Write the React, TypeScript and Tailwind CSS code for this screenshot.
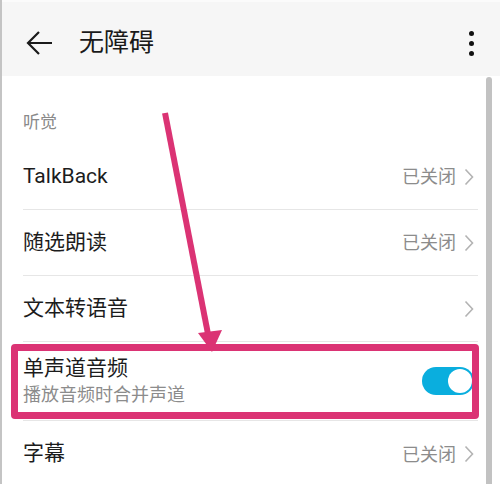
import React from "react";

const font = { fontFamily: 'Roboto, "Noto Sans CJK SC", sans-serif' };

function Chevron() {
  return (
    <svg width="10" height="18" viewBox="0 0 10 18" className="ml-[8px] shrink-0">
      <polyline points="1.5,1.5 8.5,9 1.5,16.5" fill="none" stroke="#b3b3b3" strokeWidth="1.6" />
    </svg>
  );
}

function Row({ title, value, last }: { title: string; value?: string; last?: boolean }) {
  return (
    <div
      className={
        "flex h-[66px] items-center justify-between pr-[4px] " +
        (last ? "" : "border-b border-[#e6e6e6]")
      }
    >
      <span className="text-[21px] text-[#1c1c1c]">{title}</span>
      <div className="flex items-center">
        {value && <span className="text-[18px] text-[#8c8c8c]">{value}</span>}
        <Chevron />
      </div>
    </div>
  );
}

export default function App() {
  return (
    <div
      className="relative h-[484px] w-[500px] overflow-hidden border-l-2 border-[#c4c4c4] bg-white"
      style={font}
    >
      {/* top bar */}
      <div className="flex h-[76px] items-center border-t-2 border-[#fbfbfb] bg-[#f6f6f6] pl-[24px] pr-[26px] pt-[8px]">
        <svg width="28" height="26" viewBox="0 0 28 26" className="shrink-0">
          <path d="M26 13H3M13 2L2 13l11 11" fill="none" stroke="#1a1a1a" strokeWidth="2.2" />
        </svg>
        <span className="ml-[25px] text-[25px] text-[#1a1a1a]">无障碍</span>
        <div className="ml-auto flex flex-col gap-[5px]">
          <span className="h-[5px] w-[5px] rounded-full bg-[#111]" />
          <span className="h-[5px] w-[5px] rounded-full bg-[#111]" />
          <span className="h-[5px] w-[5px] rounded-full bg-[#111]" />
        </div>
      </div>

      {/* list */}
      <div className="ml-[21px] mr-[22px]">
        <div className="flex h-[68px] items-end pb-[9px]">
          <span className="text-[17px] text-[#8a8a8a]">听觉</span>
        </div>
        <Row title="TalkBack" value="已关闭" />
        <Row title="随选朗读" value="已关闭" />
        <Row title="文本转语音" />
        <div className="flex h-[79px] items-center justify-between border-b border-[#e6e6e6]">
          <div className="flex flex-col">
            <span className="text-[21px] leading-[28px] text-[#1c1c1c]">单声道音频</span>
            <span className="text-[18px] leading-[26px] text-[#8c8c8c]">播放音频时合并声道</span>
          </div>
          <div className="mr-[4px] flex h-[28px] w-[52px] items-center justify-end rounded-full bg-[#0aaede] pr-[2px]">
            <span className="h-[24px] w-[24px] rounded-full bg-white" />
          </div>
        </div>
        <Row title="字幕" value="已关闭" last />
      </div>

      {/* scrollbar */}
      <div className="absolute right-[8px] top-[77px] h-[420px] w-[6px] rounded-full bg-[#c2c2c2]" />

      {/* annotation box */}
      <div className="absolute left-[9px] top-[344px] h-[75px] w-[468px] rounded-[4px] border-[7px] border-[#db3374]" />

      {/* annotation arrow */}
      <svg className="absolute left-0 top-0" width="500" height="484" viewBox="0 0 500 484">
        <line x1="163" y1="113" x2="206" y2="334" stroke="#db3374" strokeWidth="6" />
        <polygon points="196,333 220,330 210,352" fill="#db3374" />
      </svg>
    </div>
  );
}
